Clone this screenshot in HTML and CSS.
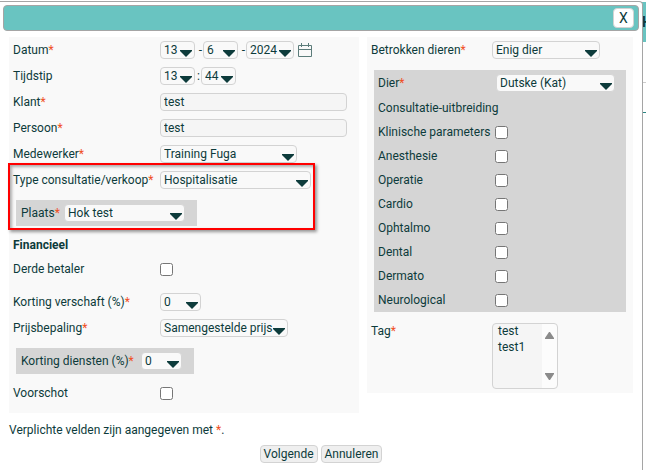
FILE: index.html
```html
<!DOCTYPE html>
<html lang="nl">
<head>
    <meta charset="UTF-8">
    <meta name="viewport" content="width=device-width, initial-scale=1.0">
    <title>Consultatie</title>
    <link rel="stylesheet" href="styles.css">
</head>
<body>
    <div class="backdrop">
        <div class="backdrop-header">H</div>
        <div class="backdrop-row"></div>
        <div class="backdrop-row accent"></div>
    </div>

    <div class="dialog">
        <div class="titlebar">
            <button type="button" class="close">X</button>
        </div>
        <form>
            <div class="columns">
                <div class="panel panel-main">
                    <div class="row">
                        <label for="day">Datum<span class="req">*</span></label>
                        <div class="group">
                            <select id="day" class="w-day"><option>13</option></select>
                            <span class="sep">-</span>
                            <select class="w-day" aria-label="Maand"><option>6</option></select>
                            <span class="sep">-</span>
                            <select class="w-year" aria-label="Jaar"><option>2024</option></select>
                            <svg class="calendar" width="14" height="15" viewBox="0 0 14 15">
                                <path d="M.5 2.5h13v11H.5zM.5 6.5h13M3.5 0v4M10.5 0v4" fill="none" stroke="#5c7c7a"/>
                            </svg>
                        </div>
                    </div>
                    <div class="row">
                        <label for="hour">Tijdstip</label>
                        <div class="group">
                            <select id="hour" class="w-day"><option>13</option></select>
                            <span class="sep colon">:</span>
                            <select class="w-day" aria-label="Minuten"><option>44</option></select>
                        </div>
                    </div>
                    <div class="row">
                        <label for="client">Klant<span class="req">*</span></label>
                        <input type="text" id="client" value="test">
                    </div>
                    <div class="row">
                        <label for="person">Persoon<span class="req">*</span></label>
                        <input type="text" id="person" value="test">
                    </div>
                    <div class="row">
                        <label for="employee">Medewerker<span class="req">*</span></label>
                        <select id="employee" class="w-employee"><option>Training Fuga</option></select>
                    </div>
                    <div class="highlight">
                        <div class="row">
                            <label for="type">Type consultatie/verkoop<span class="req">*</span></label>
                            <select id="type" class="w-type"><option>Hospitalisatie</option></select>
                        </div>
                        <div class="sub sub-place">
                            <label for="place">Plaats<span class="req">*</span></label>
                            <select id="place" class="w-place"><option>Hok test</option></select>
                        </div>
                    </div>
                    <h2>Financieel</h2>
                    <div class="row check spaced">
                        <label for="third">Derde betaler</label>
                        <input type="checkbox" id="third">
                    </div>
                    <div class="row">
                        <label for="discount">Korting verschaft (%)<span class="req">*</span></label>
                        <select id="discount" class="w-discount"><option>0</option></select>
                    </div>
                    <div class="row">
                        <label for="pricing">Prijsbepaling<span class="req">*</span></label>
                        <select id="pricing" class="w-pricing"><option>Samengestelde prijs</option></select>
                    </div>
                    <div class="sub sub-service">
                        <label for="service">Korting diensten (%)<span class="req">*</span></label>
                        <select id="service" class="w-service"><option>0</option></select>
                    </div>
                    <div class="row check spaced">
                        <label for="advance">Voorschot</label>
                        <input type="checkbox" id="advance">
                    </div>
                </div>

                <div class="panel panel-side">
                    <div class="row">
                        <label for="animals">Betrokken dieren<span class="req">*</span></label>
                        <select id="animals" class="w-animals"><option>Enig dier</option></select>
                    </div>
                    <div class="animal">
                        <div class="row">
                            <label for="animal">Dier<span class="req">*</span></label>
                            <select id="animal" class="w-animal"><option>Dutske (Kat)</option></select>
                        </div>
                        <div class="row check">Consultatie-uitbreiding</div>
                        <div class="row check"><label for="c1">Klinische parameters</label><input type="checkbox" id="c1"></div>
                        <div class="row check"><label for="c2">Anesthesie</label><input type="checkbox" id="c2"></div>
                        <div class="row check"><label for="c3">Operatie</label><input type="checkbox" id="c3"></div>
                        <div class="row check"><label for="c4">Cardio</label><input type="checkbox" id="c4"></div>
                        <div class="row check"><label for="c5">Ophtalmo</label><input type="checkbox" id="c5"></div>
                        <div class="row check"><label for="c6">Dental</label><input type="checkbox" id="c6"></div>
                        <div class="row check"><label for="c7">Dermato</label><input type="checkbox" id="c7"></div>
                        <div class="row check"><label for="c8">Neurological</label><input type="checkbox" id="c8"></div>
                    </div>
                    <div class="row tags">
                        <label for="tag">Tag<span class="req">*</span></label>
                        <select id="tag" class="list" multiple size="4">
                            <option>test</option>
                            <option>test1</option>
                        </select>
                    </div>
                </div>
            </div>

            <p class="note">Verplichte velden zijn aangegeven met <span class="req">*</span>.</p>
            <div class="actions">
                <button type="submit">Volgende</button>
                <button type="button">Annuleren</button>
            </div>
        </form>
    </div>
</body>
</html>
```
FILE: styles.css
```css
*, *::after {
    box-sizing: border-box;
}
body {
    margin: 0;
    overflow: hidden;
    background-color: #fff;
    color: #0d3b3b;
    font-family: Roboto, sans-serif;
    font-size: 12px;
    line-height: 16px;
}

/* page behind the dialog */
.backdrop {
    position: absolute;
    top: 2px;
    right: 0;
    width: 4px;
    overflow: hidden;
}
.backdrop-header {
    height: 40px;
    padding-top: 12px;
    background-color: #69c4c1;
    font-size: 14px;
    font-weight: bold;
}
.backdrop-row {
    height: 41px;
    border-bottom: 1px solid #ccc;
}
.backdrop-row.accent {
    height: 30px;
    border-color: #2a8583;
}

.dialog {
    position: relative;
    min-height: 100vh;
    margin: 1px 3px 0 0;
    padding: 3px 3px 0;
    background-color: #fff;
    border-top: 1px solid #a5a5a5;
    border-right: 1px solid #a5a5a5;
    border-top-right-radius: 4px;
}
.titlebar {
    display: flex;
    align-items: center;
    justify-content: flex-end;
    height: 26px;
    padding-right: 4px;
    background-color: #69c4c1;
    border: 1px solid #a5a5a5;
    border-radius: 4px;
}
form {
    padding: 6px 6px 0;
}
.columns {
    display: flex;
    align-items: flex-start;
    gap: 8px;
}
.panel {
    background-color: #f9f9f9;
}
.panel-main {
    flex: 350;
}
.panel-side {
    flex: 266;
}
.row {
    display: flex;
    align-items: center;
    height: 26px;
    padding-left: 4px;
}
.row > label {
    flex: none;
    width: 147px;
}
.row.check {
    height: 24px;
}
.row.spaced {
    margin-bottom: 8px;
}
.panel-side .row > label {
    width: 121px;
}
.panel-side .animal label {
    width: 118px;
}
.panel-side .check label {
    width: 117px;
}
.req {
    color: #f04e23;
}
.group {
    display: flex;
    align-items: center;
}
.sep {
    width: 8px;
    padding-right: 1px;
    text-align: right;
}
.colon {
    width: 6px;
}
.calendar {
    margin-left: 4px;
}

input, select, button {
    margin: 0;
    color: #0d3b3b;
    font-family: Roboto, sans-serif;
    font-size: 12px;
}
input[type="text"], select, button {
    height: 18px;
    border: 1px solid #d3d3d3;
    border-radius: 4px;
}
input[type="text"] {
    width: 187px;
    padding: 0 3px;
    background-color: #f5f5f5;
}
input[type="checkbox"] {
    width: 13px;
    height: 13px;
}
select {
    appearance: none;
    padding: 0 0 0 3px;
    background: #f9f9f9 url("data:image/svg+xml,%3Csvg xmlns='http://www.w3.org/2000/svg' width='12' height='7'%3E%3Cpath d='M0 0h12v1L6 7 0 1z' fill='%230d3b3b'/%3E%3C/svg%3E") no-repeat right 2px top 8px;
}
.w-day {
    width: 35px;
}
.w-year {
    width: 48px;
}
.w-employee {
    width: 137px;
}
.w-type {
    width: 151px;
}
.w-discount {
    width: 41px;
}
.w-pricing {
    width: 128px;
}
.w-animals {
    width: 108px;
}
.w-place {
    width: 121px;
}
.w-service {
    width: 41px;
}
.w-animal {
    width: 119px;
}

h2 {
    margin: 0;
    padding-left: 4px;
    font-size: 12px;
    line-height: 24px;
}
.sub {
    display: flex;
    align-items: center;
    height: 26px;
    margin: 7px 0 7px 7px;
    padding-left: 5px;
    background-color: #d5d5d5;
}
.sub select, .animal select {
    border-color: #d5d5d5;
}
.sub-place {
    width: 181px;
}
.sub-place label {
    width: 43px;
}
.sub-service {
    width: 178px;
}
.sub-service label {
    width: 120px;
}

.highlight {
    position: relative;
}
.highlight::after {
    content: "";
    position: absolute;
    top: -4px;
    bottom: -4px;
    left: -1px;
    width: 307px;
    border: 2px solid #f00;
    box-shadow: 2px 2px 3px rgba(0, 0, 0, 0.4), inset 2px 2px 3px rgba(0, 0, 0, 0.3);
    pointer-events: none;
}

.animal {
    margin: 7px;
    background-color: #d5d5d5;
}
.tags {
    align-items: flex-start;
    height: auto;
    padding-top: 4px;
    padding-bottom: 4px;
}
.list {
    width: 66px;
    height: 66px;
    padding: 0 0 0 3px;
    overflow: hidden;
    background: #f5f5f5 url("data:image/svg+xml,%3Csvg xmlns='http://www.w3.org/2000/svg' width='15' height='64'%3E%3Cpath d='M0 0h15v64H0z' fill='%23fcfcfc'/%3E%3Cpath d='M7 8h1l4 6v1H3v-1zM3 49h9v1l-4 6H7l-4-6z' fill='%238b8b8b'/%3E%3C/svg%3E") no-repeat right top;
}
.list option {
    height: 16px;
    padding: 0 2px;
    line-height: 18px;
}

.note {
    margin: 9px 0 7px;
}
.actions {
    display: flex;
    justify-content: center;
    gap: 3px;
}
.actions button {
    padding: 0 3px;
    background-color: #efefef;
    line-height: 16px;
}
.titlebar .close {
    width: 21px;
    height: 20px;
    padding: 0;
    background-color: #fff;
    font-size: 14px;
}
```
